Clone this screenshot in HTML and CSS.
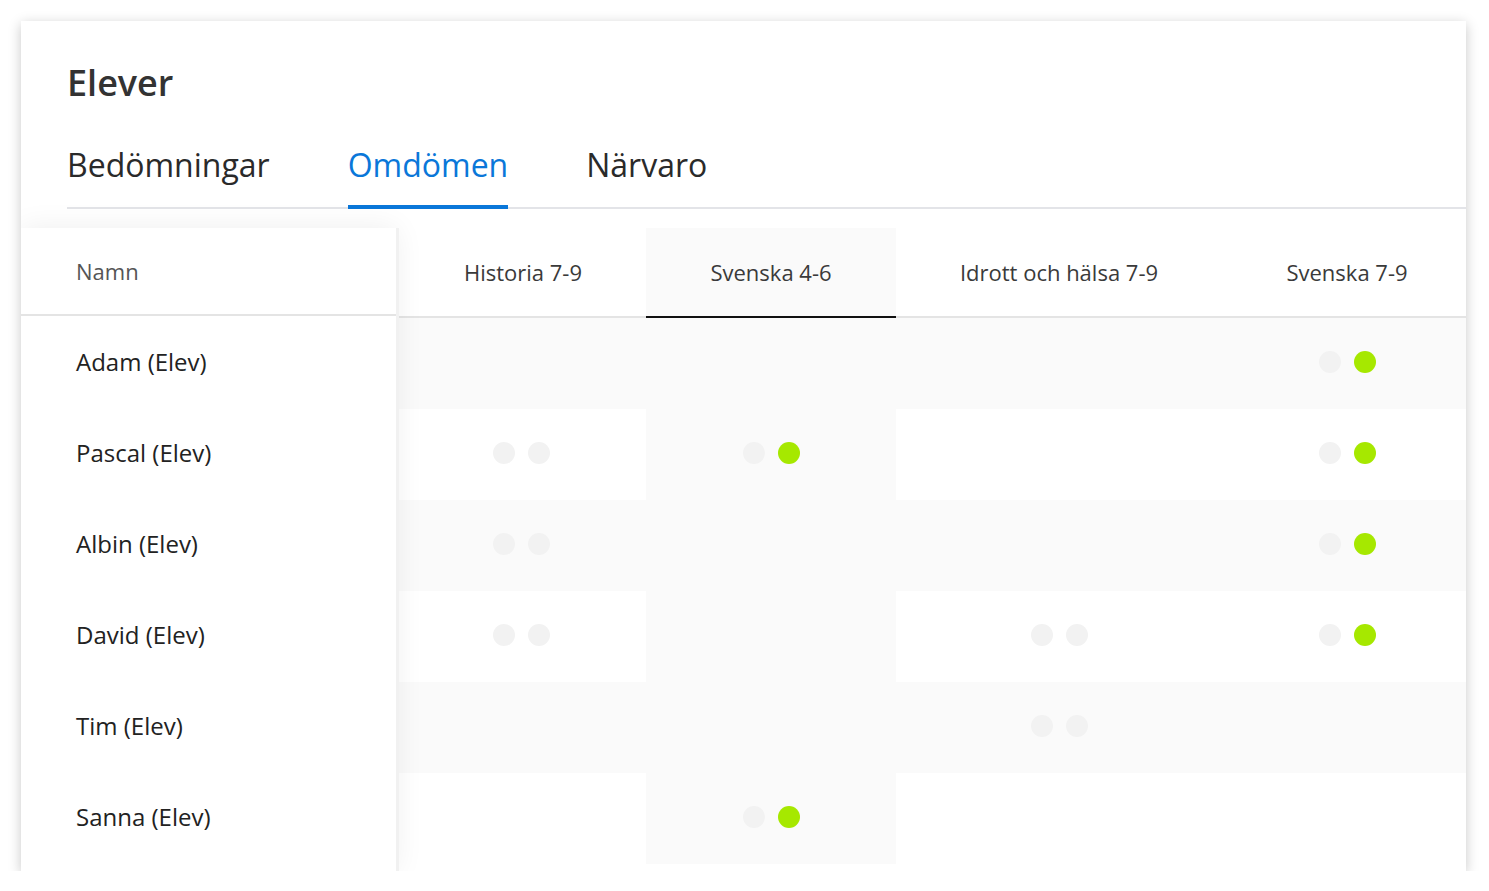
FILE: index.html
```html
<!DOCTYPE html>
<html lang="sv">
<head>
    <meta charset="UTF-8">
    <meta name="viewport" content="width=device-width, initial-scale=1.0">
    <title>Elever</title>
    <link rel="stylesheet" href="styles.css">
</head>
<body>

    <div class="card">
        <header class="card-head">
            <h1 class="title">Elever</h1>
            <nav class="tabs">
                <a class="tab">Bedömningar</a>
                <a class="tab active">Omdömen</a>
                <a class="tab">Närvaro</a>
            </nav>
        </header>

        <div class="table">
            <!-- Namnkolumnen -->
            <div class="names">
                <div class="names-head">Namn</div>
                <div class="name">Adam (Elev)</div>
                <div class="name">Pascal (Elev)</div>
                <div class="name">Albin (Elev)</div>
                <div class="name">David (Elev)</div>
                <div class="name">Tim (Elev)</div>
                <div class="name">Sanna (Elev)</div>
            </div>

            <!-- Omdömen per kurs -->
            <div class="grades">
                <div class="grade-row head">
                    <div class="cell first">Historia 7-9</div>
                    <div class="cell active">Svenska 4-6</div>
                    <div class="cell">Idrott och hälsa 7-9</div>
                    <div class="cell">Svenska 7-9</div>
                </div>
                <div class="grade-row">
                    <div class="cell"></div>
                    <div class="cell active"></div>
                    <div class="cell"></div>
                    <div class="cell"><span class="dot"></span><span class="dot done"></span></div>
                </div>
                <div class="grade-row">
                    <div class="cell"><span class="dot"></span><span class="dot"></span></div>
                    <div class="cell active"><span class="dot"></span><span class="dot done"></span></div>
                    <div class="cell"></div>
                    <div class="cell"><span class="dot"></span><span class="dot done"></span></div>
                </div>
                <div class="grade-row">
                    <div class="cell"><span class="dot"></span><span class="dot"></span></div>
                    <div class="cell active"></div>
                    <div class="cell"></div>
                    <div class="cell"><span class="dot"></span><span class="dot done"></span></div>
                </div>
                <div class="grade-row">
                    <div class="cell"><span class="dot"></span><span class="dot"></span></div>
                    <div class="cell active"></div>
                    <div class="cell"><span class="dot"></span><span class="dot"></span></div>
                    <div class="cell"><span class="dot"></span><span class="dot done"></span></div>
                </div>
                <div class="grade-row">
                    <div class="cell"></div>
                    <div class="cell active"></div>
                    <div class="cell"><span class="dot"></span><span class="dot"></span></div>
                    <div class="cell"></div>
                </div>
                <div class="grade-row">
                    <div class="cell"></div>
                    <div class="cell active"><span class="dot"></span><span class="dot done"></span></div>
                    <div class="cell"></div>
                    <div class="cell"></div>
                </div>
            </div>
        </div>
    </div>

</body>
</html>
```

FILE: styles.css
```css
* {
    box-sizing: border-box;
}

body {
    margin: 0;
    background: #fff;
    font-family: 'Open Sans', 'Noto Sans', sans-serif;
    color: #2a2a2a;
}

.card {
    display: flex;
    flex-direction: column;
    margin: 21px 0 0 21px;
    width: 1445px;
    height: 850px;
    overflow: hidden;
    background: #fff;
    box-shadow: 0 3px 12px rgba(0, 0, 0, 0.22);
}

.card-head {
    padding: 40px 0 0 46px;
}

.title {
    margin: 0;
    font-size: 36px;
    line-height: 44px;
    font-weight: 600;
    color: #333;
}

.tabs {
    display: flex;
    gap: 78px;
    margin-top: 40px;
    border-bottom: 2px solid #e3e4e8;
}

.tab {
    font-size: 32px;
    line-height: 40px;
    padding-bottom: 20px;
    border-bottom: 4px solid transparent;
    margin-bottom: -2px;
    color: #2a2a2a;
    cursor: pointer;
}

.tab.active {
    color: #0a77d9;
    border-bottom-color: #0a77d9;
}

/* Tabellen */
.table {
    flex: 1;
    display: flex;
    align-items: flex-start;
    margin-top: 19px;
}

.names {
    flex: 0 0 375px;
    align-self: stretch;
    background: #fff;
    position: relative;
    z-index: 1;
    box-shadow: 3px 0 0 #f1f1f1, 0 0 28px rgba(0, 0, 0, 0.07);
}

.names-head {
    height: 88px;
    display: flex;
    align-items: center;
    padding-left: 55px;
    border-bottom: 2px solid #e4e4e4;
    font-size: 22px;
    color: #555;
}

.name {
    height: 91px;
    display: flex;
    align-items: center;
    padding-left: 55px;
    font-size: 24px;
    color: #222;
}

.grades {
    flex: none;
}

.grade-row {
    display: grid;
    grid-template-columns: 250px 250px 326px 250px;
    height: 91px;
}

.grade-row:nth-child(even) {
    background: #fafafa;
}

.cell {
    display: flex;
    align-items: center;
    justify-content: center;
    gap: 13px;
    padding-bottom: 3px;
}

.cell.active {
    background: #fafafa;
}

.grade-row.head {
    height: 90px;
}

.grade-row.head .cell {
    padding: 0;
    border-bottom: 2px solid #e4e4e4;
    font-size: 22px;
    color: #3a3a3a;
}

.grade-row.head .cell.first {
    padding-left: 4px;
}

.grade-row.head .cell.active {
    border-bottom-color: #111;
}

.dot {
    width: 22px;
    height: 22px;
    border-radius: 50%;
    background: #f2f2f2;
}

.dot.done {
    background: #a6e800;
}
```
